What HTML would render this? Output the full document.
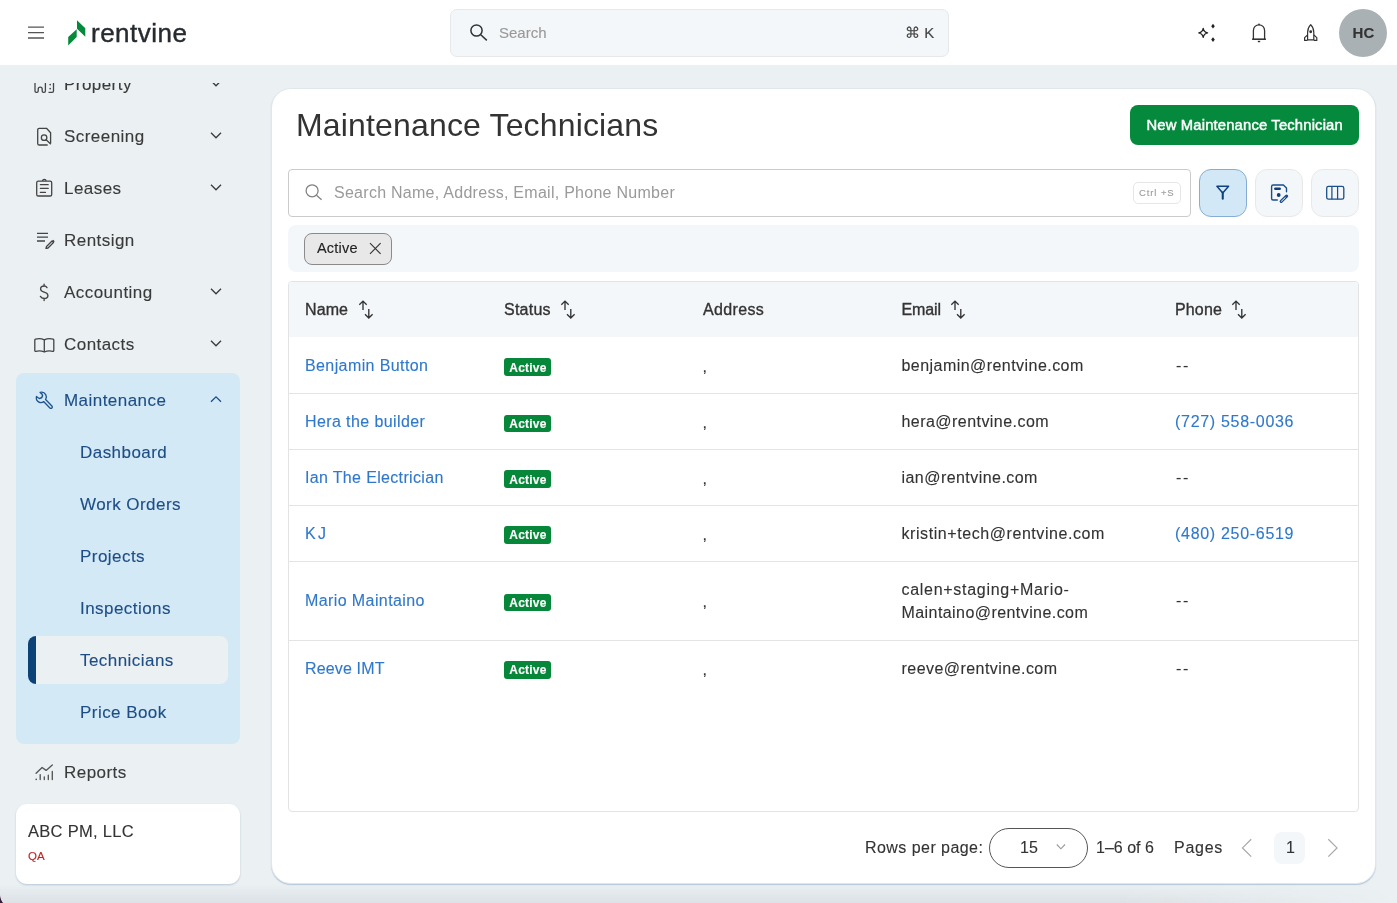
<!DOCTYPE html><html><head><meta charset="utf-8"><style>
*{box-sizing:border-box;margin:0;padding:0}
html,body{width:1397px;height:903px;overflow:hidden}
body{font-family:"Liberation Sans",sans-serif;background:#ebf0f3;position:relative;color:#333}
.a{position:absolute}
.t{position:absolute;white-space:nowrap;-webkit-text-stroke:0.12px currentColor}
</style></head><body><div class="a" style="left:0;top:0;width:1397px;height:903px;will-change:transform">
<div class="a" style="left:0px;top:0px;width:1397px;height:65px;background:#fff"></div>
<svg class="a" style="left:27px;top:26px" width="18" height="14" viewBox="0 0 18 14"><path d="M1 1.2H17M1 6.6H17M1 12H17" stroke="#555" stroke-width="1.3" fill="none"/></svg>
<svg class="a" style="left:66px;top:18px" width="22" height="30" viewBox="66 18 22 30"><path d="M77 20.2L85.3 28.2V36.7L77 28.8Z M76.7 29.2V37.1L68.2 45.5V37.1Z" fill="#058a3c"/></svg>
<div class="t" style="left:91px;top:17px;font-size:26px;line-height:32px;color:#262b2f;font-weight:400;letter-spacing:0.5px;-webkit-text-stroke:0.4px #262b2f">rentvine</div>
<div class="a" style="left:450px;top:9px;width:499px;height:48px;background:#f4f7fa;border:1px solid #e6e8ea;border-radius:7px"></div>
<svg class="a" style="left:464px;top:18px" width="26" height="26" viewBox="0 0 26 26"><circle cx="12.5" cy="12.5" r="5.6" stroke="#333" stroke-width="1.5" fill="none"/><path d="M16.5 16.5L22.8 22.4" stroke="#333" stroke-width="1.5"/></svg>
<div class="t" style="left:499px;top:23px;font-size:15px;line-height:19px;color:#999;font-weight:400;letter-spacing:0px;">Search</div>
<div class="t" style="left:905px;top:23px;font-size:15px;line-height:19px;color:#444;font-weight:400;letter-spacing:0px;">&#8984; K</div>
<svg class="a" style="left:1195px;top:20px" width="24" height="24" viewBox="0 0 24 24"><path d="M8.2 8.3C8.7 11.3 9.6 12.2 12.6 12.8C9.6 13.4 8.7 14.3 8.2 17.3C7.7 14.3 6.8 13.4 3.8 12.8C6.8 12.2 7.7 11.3 8.2 8.3Z" stroke="#222" stroke-width="1.3" fill="none" stroke-linejoin="round"/><path d="M18 3.8L19.8 6.2L18 8.6L16.2 6.2Z M18 17.2L19.8 19.6L18 22L16.2 19.6Z" fill="#222"/></svg>
<svg class="a" style="left:1247px;top:20px" width="24" height="26" viewBox="0 0 24 26"><path d="M6.4 19V10.5C6.4 7.2 8.9 4.8 12 4.8C15.1 4.8 17.6 7.2 17.6 10.5V19" stroke="#333" stroke-width="1.3" fill="none"/><path d="M5.1 19.2H18.9" stroke="#333" stroke-width="1.6"/><circle cx="12" cy="4.3" r="0.9" fill="#333"/><path d="M10.8 21.5H13.2" stroke="#333" stroke-width="1.4"/></svg>
<svg class="a" style="left:1299px;top:20px" width="24" height="24" viewBox="0 0 24 24"><path d="M11.7 4.6C9.6 6.7 8.6 9.6 8.6 12.5V19.8H14.8V12.5C14.8 9.6 13.8 6.7 11.7 4.6Z" stroke="#333" stroke-width="1.2" fill="none" stroke-linejoin="round"/><path d="M8.6 15L5.6 17.6V20.4H8.6 M14.8 15L17.8 17.6V20.4H14.8" stroke="#333" stroke-width="1.2" fill="none" stroke-linejoin="round"/><circle cx="11.7" cy="11.8" r="1.45" fill="#333"/></svg>
<div class="a" style="left:1339px;top:8.7px;width:48px;height:48.0px;background:#aab1b4;border-radius:50%"></div>
<div class="t" style="left:1352.5px;top:23px;font-size:15px;line-height:19px;color:#333;font-weight:700;letter-spacing:0.1px;">HC</div>
<div class="a" style="left:271px;top:88px;width:1105px;height:796px;background:#fff;border-radius:20px;border:1px solid #dfe6ed;box-shadow:0 1px 1px rgba(140,165,195,.55)"></div>
<svg class="a" style="left:30px;top:74px" width="28" height="22" viewBox="0 0 28 22"><path d="M5 5V17C5 17.9 5.5 18.3 6.3 18.3H6.9C7.7 18.3 8.2 17.8 8.2 17V15.2C8.2 14.1 9.1 13.2 10.2 13.2C11.3 13.2 12.2 14.1 12.2 15.2V17C12.2 17.8 12.7 18.3 13.5 18.3H14C14.8 18.3 15.4 17.8 15.4 17V5M23.5 5V17C23.5 17.8 22.9 18.3 22.1 18.3H18.5" stroke="#444" stroke-width="1.3" fill="none" stroke-linejoin="round"/><circle cx="20.2" cy="10.6" r="0.85" fill="#444"/><circle cx="20.2" cy="14.6" r="0.85" fill="#444"/></svg>
<div class="t" style="left:64px;top:74px;font-size:17px;line-height:21px;color:#3a3a3a;font-weight:400;letter-spacing:0.45px;">Property</div>
<svg class="a" style="left:209px;top:78px" width="14" height="12" viewBox="0 0 14 12"><path d="M2 2.8L7 7.8L12 2.8" stroke="#3a3a3a" stroke-width="1.3" fill="none"/></svg>
<div class="a" style="left:0px;top:65px;width:256px;height:18px;background:#ebf0f3"></div>
<svg class="a" style="left:32px;top:124px" width="24" height="24" viewBox="0 0 24 24"><path d="M15.7 21H7.3C6.4 21 5.7 20.3 5.7 19.4V5.9C5.7 5 6.4 4.3 7.3 4.3H14.5L18.6 8.7V19.5" stroke="#444" stroke-width="1.3" fill="none" stroke-linejoin="round"/><circle cx="12.1" cy="13.7" r="2.75" stroke="#444" stroke-width="1.3" fill="none"/><path d="M14.1 15.8L18.4 19.8" stroke="#444" stroke-width="1.3" stroke-linecap="round"/></svg>
<div class="t" style="left:64px;top:126px;font-size:17px;line-height:21px;color:#3a3a3a;font-weight:400;letter-spacing:0.45px;">Screening</div>
<svg class="a" style="left:209px;top:130px" width="14" height="12" viewBox="0 0 14 12"><path d="M2 2.8L7 7.8L12 2.8" stroke="#3a3a3a" stroke-width="1.3" fill="none"/></svg>
<svg class="a" style="left:30px;top:174px" width="28" height="28" viewBox="0 0 28 28"><rect x="6.7" y="7.1" width="15" height="14.9" rx="1.6" stroke="#444" stroke-width="1.3" fill="none"/><path d="M12.6 7.1C12.6 4.9 16 4.9 16 7.1" stroke="#444" stroke-width="1.3" fill="none"/><path d="M10.4 10.7H18.2M10.4 14.4H18.2M10.4 18.4H15.4" stroke="#444" stroke-width="1.3" stroke-linecap="round"/></svg>
<div class="t" style="left:64px;top:178px;font-size:17px;line-height:21px;color:#3a3a3a;font-weight:400;letter-spacing:0.45px;">Leases</div>
<svg class="a" style="left:209px;top:182px" width="14" height="12" viewBox="0 0 14 12"><path d="M2 2.8L7 7.8L12 2.8" stroke="#3a3a3a" stroke-width="1.3" fill="none"/></svg>
<svg class="a" style="left:35px;top:231px" width="22" height="18" viewBox="0 0 22 18"><path d="M2 2.3H13M2 6.2H13M2 10H10" stroke="#444" stroke-width="1.3"/><path d="M11.5 15.5L17 10L18.5 11.5L13 17L11 17.5Z" stroke="#444" stroke-width="1.3" fill="none" stroke-linejoin="round"/><path d="M17 10L18.2 8.8L19.7 10.3L18.5 11.5Z" fill="#444"/></svg>
<div class="t" style="left:64px;top:230px;font-size:17px;line-height:21px;color:#3a3a3a;font-weight:400;letter-spacing:0.45px;">Rentsign</div>
<svg class="a" style="left:30px;top:280px" width="30" height="26" viewBox="0 0 30 26"><path d="M17 7.6C16.4 6.6 15.3 6 14.1 6C12 6 10.6 7.3 10.6 9C10.6 10.8 12 11.5 14.1 12.1C16.3 12.7 17.9 13.5 17.9 15.4C17.9 17.2 16.3 18.5 14.1 18.5C12.5 18.5 11.1 17.7 10.4 16.4M14.1 4.1V6M14.1 18.5V20.6" stroke="#444" stroke-width="1.35" fill="none" stroke-linecap="round"/></svg>
<div class="t" style="left:64px;top:282px;font-size:17px;line-height:21px;color:#3a3a3a;font-weight:400;letter-spacing:0.45px;">Accounting</div>
<svg class="a" style="left:209px;top:286px" width="14" height="12" viewBox="0 0 14 12"><path d="M2 2.8L7 7.8L12 2.8" stroke="#3a3a3a" stroke-width="1.3" fill="none"/></svg>
<svg class="a" style="left:33px;top:336.6px" width="23" height="16" viewBox="0 0 23 16"><path d="M1.8 3C1.8 2.5 2.1 2.2 2.5 2.1C5.2 1.4 8.7 1.5 11.3 2.9C13.9 1.5 17.4 1.4 20.1 2.1C20.5 2.2 20.8 2.5 20.8 3V13.6C20.8 14.1 20.4 14.4 19.9 14.3C17.1 13.6 14 13.7 11.3 15C8.6 13.7 5.5 13.6 2.7 14.3C2.2 14.4 1.8 14.1 1.8 13.6Z M11.3 2.9V15" stroke="#444" stroke-width="1.3" fill="none" stroke-linejoin="round"/></svg>
<div class="t" style="left:64px;top:334px;font-size:17px;line-height:21px;color:#3a3a3a;font-weight:400;letter-spacing:0.45px;">Contacts</div>
<svg class="a" style="left:209px;top:338px" width="14" height="12" viewBox="0 0 14 12"><path d="M2 2.8L7 7.8L12 2.8" stroke="#3a3a3a" stroke-width="1.3" fill="none"/></svg>
<div class="a" style="left:16px;top:372.5px;width:224px;height:371.5px;background:#d3e9f6;border-radius:8px"></div>
<svg class="a" style="left:32px;top:388px" width="24" height="24" viewBox="0 0 24 24"><path d="M8.1 4.4C9.4 5.3 10.5 6.4 10.6 7.6C10.4 9 9 10.3 7.5 10.5C6.3 10.2 5.3 9.3 4.5 8.4C3.9 10.7 4.8 13 6.9 14.1C8.5 14.9 10.3 14.7 11.6 13.6L17.9 19.9C18.5 20.5 19.3 20.5 19.9 19.9C20.5 19.3 20.5 18.5 19.9 17.9L13.6 11.6C14.6 10.1 14.6 8.1 13.7 6.6C12.6 4.7 10.2 3.8 8.1 4.4Z" stroke="#1e5591" stroke-width="1.35" fill="none" stroke-linejoin="round"/></svg>
<div class="t" style="left:64px;top:390px;font-size:17px;line-height:21px;color:#1e4d86;font-weight:400;letter-spacing:0.45px;">Maintenance</div>
<svg class="a" style="left:209px;top:394px" width="14" height="12" viewBox="0 0 14 12"><path d="M2 7.8L7 2.8L12 7.8" stroke="#1e4d86" stroke-width="1.3" fill="none"/></svg>
<div class="a" style="left:28px;top:636px;width:200px;height:48px;background:#ebf0f3;border-radius:8px;overflow:hidden"><div class="a" style="left:0;top:0;width:8px;height:48px;background:#0d4279"></div></div>
<div class="t" style="left:80px;top:442px;font-size:17px;line-height:21px;color:#1e4d86;font-weight:400;letter-spacing:0.45px;">Dashboard</div>
<div class="t" style="left:80px;top:494px;font-size:17px;line-height:21px;color:#1e4d86;font-weight:400;letter-spacing:0.45px;">Work Orders</div>
<div class="t" style="left:80px;top:546px;font-size:17px;line-height:21px;color:#1e4d86;font-weight:400;letter-spacing:0.45px;">Projects</div>
<div class="t" style="left:80px;top:598px;font-size:17px;line-height:21px;color:#1e4d86;font-weight:400;letter-spacing:0.45px;">Inspections</div>
<div class="t" style="left:80px;top:650px;font-size:17px;line-height:21px;color:#1e4d86;font-weight:400;letter-spacing:0.45px;">Technicians</div>
<div class="t" style="left:80px;top:702px;font-size:17px;line-height:21px;color:#1e4d86;font-weight:400;letter-spacing:0.45px;">Price Book</div>
<svg class="a" style="left:30px;top:758px" width="28" height="28" viewBox="0 0 28 28"><path d="M6.1 15.3L12.1 9.5L16.1 12.4L22.3 7" stroke="#555" stroke-width="1.35" fill="none" stroke-linejoin="round" stroke-linecap="round"/><path d="M10.2 16.6V21.6M14.3 18.8V21.6M18.3 17.2V21.6M22.3 13.4V21.6" stroke="#555" stroke-width="1.35" stroke-linecap="round"/><circle cx="6.2" cy="21.4" r="0.8" fill="#555"/></svg>
<div class="t" style="left:64px;top:762px;font-size:17px;line-height:21px;color:#3a3a3a;font-weight:400;letter-spacing:0.45px;">Reports</div>
<div class="a" style="left:16px;top:804px;width:224px;height:80px;background:#fff;border-radius:11px;box-shadow:0 1px 2px rgba(120,150,180,.45)"></div>
<div class="t" style="left:28px;top:821px;font-size:16.5px;line-height:21px;color:#333;font-weight:400;letter-spacing:0.3px;">ABC PM, LLC</div>
<div class="t" style="left:28px;top:849px;font-size:11.5px;line-height:14px;color:#c02626;font-weight:400;letter-spacing:0.1px;">QA</div>
<div class="t" style="left:296px;top:105px;font-size:32px;line-height:40px;color:#333;font-weight:400;letter-spacing:0.16px;-webkit-text-stroke:0">Maintenance Technicians</div>
<div class="a" style="left:1130px;top:105px;width:229px;height:40px;background:#05893c;border-radius:8px"></div>
<div class="t" style="left:1146.5px;top:116px;font-size:14.8px;line-height:18px;color:#fff;font-weight:400;letter-spacing:0.16px;-webkit-text-stroke:0.45px #fff">New Maintenance Technician</div>
<div class="a" style="left:288px;top:169px;width:903px;height:48px;border:1px solid #cbcbcb;border-radius:4px;background:#fff"></div>
<svg class="a" style="left:300px;top:180px" width="28" height="28" viewBox="0 0 28 28"><circle cx="12.1" cy="10.8" r="6" stroke="#808080" stroke-width="1.25" fill="none"/><path d="M16.5 15.2L21.6 19.7" stroke="#808080" stroke-width="1.25"/></svg>
<div class="t" style="left:334px;top:183px;font-size:16px;line-height:20px;color:#9a9a9a;font-weight:400;letter-spacing:0.27px;-webkit-text-stroke:0">Search Name, Address, Email, Phone Number</div>
<div class="a" style="left:1133px;top:182px;width:48px;height:22px;border:1px solid #e6e6e6;border-radius:5px"></div>
<div class="t" style="left:1139px;top:187px;font-size:9.5px;line-height:12px;color:#9c9c9c;font-weight:400;letter-spacing:0.9px;">Ctrl +S</div>
<div class="a" style="left:1199px;top:169px;width:48px;height:48px;background:#d3e8f6;border:1px solid #86aed4;border-radius:12px"></div>
<svg class="a" style="left:1199px;top:169px" width="48" height="48" viewBox="0 0 48 48"><path d="M17.9 17.2H29.6L23.75 23.9Z" stroke="#0f427d" stroke-width="1.5" fill="none" stroke-linejoin="round"/><path d="M23.75 23.5V29.7" stroke="#0f427d" stroke-width="2.1" stroke-linecap="round"/></svg>
<div class="a" style="left:1255px;top:169px;width:48px;height:48px;background:#f4f7fa;border:1px solid #e8e8e8;border-radius:12px"></div>
<svg class="a" style="left:1255px;top:169px" width="48" height="48" viewBox="0 0 48 48"><path d="M22.3 31H18.1C17.2 31 16.6 30.4 16.6 29.5V17.5C16.6 16.6 17.2 16 18.1 16H28.4L31.5 19.1V22.8" stroke="#1a4f8a" stroke-width="1.4" fill="none" stroke-linejoin="round" stroke-linecap="round"/><path d="M20.3 19.8H24.7" stroke="#0e3f78" stroke-width="2.5" stroke-linecap="round"/><circle cx="23.7" cy="26" r="1.9" fill="#0e3f78"/><path d="M26.2 32.4L31.6 27.2" stroke="#1a4f8a" stroke-width="3.2" stroke-linecap="round"/><path d="M26.4 32.2L30.2 28.6" stroke="#f4f7fa" stroke-width="1" stroke-linecap="round"/></svg>
<div class="a" style="left:1311px;top:169px;width:48px;height:48px;background:#f4f7fa;border:1px solid #e8e8e8;border-radius:12px"></div>
<svg class="a" style="left:1311px;top:169px" width="48" height="48" viewBox="0 0 48 48"><rect x="15.7" y="17.4" width="17.1" height="12.8" rx="1.8" stroke="#1a4f8a" stroke-width="1.3" fill="none"/><path d="M20.9 17.4V30.2M26.6 17.4V30.2" stroke="#1a4f8a" stroke-width="1.25"/></svg>
<div class="a" style="left:288px;top:225px;width:1071px;height:47px;background:#f4f7fa;border-radius:8px"></div>
<div class="a" style="left:304px;top:233px;width:88px;height:32px;background:#e8e8e8;border:1.4px solid #8a8a8a;border-radius:8px"></div>
<div class="t" style="left:317px;top:239px;font-size:14.5px;line-height:18px;color:#222;font-weight:400;letter-spacing:0.2px;">Active</div>
<svg class="a" style="left:365px;top:238px" width="20" height="20" viewBox="0 0 20 20"><path d="M5 5.2L15.6 15.8M15.6 5.2L5 15.8" stroke="#333" stroke-width="1.15"/></svg>
<div class="a" style="left:288px;top:281px;width:1071px;height:531px;border:1px solid #e3e3e3;border-radius:4px;background:#fff"></div>
<div class="a" style="left:289px;top:282px;width:1069px;height:55px;background:#f4f7fa;border-radius:3px 3px 0 0"></div>
<div class="t" style="left:305px;top:300px;font-size:16px;line-height:20px;color:#333;font-weight:400;letter-spacing:0.1px;-webkit-text-stroke:0.35px #333">Name</div>
<svg class="a" style="left:357.9px;top:298px" width="20" height="24" viewBox="0 0 20 24"><path d="M5 12V3.5M1.3 6.8L5 3.1L8.7 6.8" stroke="#333" stroke-width="1.35" fill="none"/><path d="M10.8 11V19.8M7 16.3L10.8 20.1L14.6 16.3" stroke="#333" stroke-width="1.35" fill="none"/></svg>
<div class="t" style="left:504px;top:300px;font-size:16px;line-height:20px;color:#333;font-weight:400;letter-spacing:0.25px;-webkit-text-stroke:0.35px #333">Status</div>
<svg class="a" style="left:560.1px;top:298px" width="20" height="24" viewBox="0 0 20 24"><path d="M5 12V3.5M1.3 6.8L5 3.1L8.7 6.8" stroke="#333" stroke-width="1.35" fill="none"/><path d="M10.8 11V19.8M7 16.3L10.8 20.1L14.6 16.3" stroke="#333" stroke-width="1.35" fill="none"/></svg>
<div class="t" style="left:703px;top:300px;font-size:16px;line-height:20px;color:#333;font-weight:400;letter-spacing:0.35px;-webkit-text-stroke:0.35px #333">Address</div>
<div class="t" style="left:901.5px;top:300px;font-size:16px;line-height:20px;color:#333;font-weight:400;letter-spacing:-0.1px;-webkit-text-stroke:0.35px #333">Email</div>
<svg class="a" style="left:949.8px;top:298px" width="20" height="24" viewBox="0 0 20 24"><path d="M5 12V3.5M1.3 6.8L5 3.1L8.7 6.8" stroke="#333" stroke-width="1.35" fill="none"/><path d="M10.8 11V19.8M7 16.3L10.8 20.1L14.6 16.3" stroke="#333" stroke-width="1.35" fill="none"/></svg>
<div class="t" style="left:1175px;top:300px;font-size:16px;line-height:20px;color:#333;font-weight:400;letter-spacing:0.15px;-webkit-text-stroke:0.35px #333">Phone</div>
<svg class="a" style="left:1230.8px;top:298px" width="20" height="24" viewBox="0 0 20 24"><path d="M5 12V3.5M1.3 6.8L5 3.1L8.7 6.8" stroke="#333" stroke-width="1.35" fill="none"/><path d="M10.8 11V19.8M7 16.3L10.8 20.1L14.6 16.3" stroke="#333" stroke-width="1.35" fill="none"/></svg>
<div class="a" style="left:289px;top:393.2px;width:1069px;height:1.0px;background:#e3e3e3"></div>
<div class="t" style="left:305px;top:356px;font-size:16px;line-height:20px;color:#2f78cc;font-weight:400;letter-spacing:0.4px;">Benjamin Button</div>
<div class="a" style="left:504px;top:358.35px;width:46.5px;height:17.5px;background:#07873a;border-radius:3px"></div>
<div class="t" style="left:509.3px;top:361px;font-size:12px;line-height:15px;color:#fff;font-weight:700;letter-spacing:0.2px;">Active</div>
<div class="t" style="left:702.5px;top:357px;font-size:16px;line-height:20px;color:#333;font-weight:400;letter-spacing:0px;">,</div>
<div class="t" style="left:901.5px;top:356px;font-size:16px;line-height:20px;color:#333;font-weight:400;letter-spacing:0.45px;">benjamin@rentvine.com</div>
<div class="t" style="left:1176px;top:356px;font-size:16px;line-height:20px;color:#333;font-weight:400;letter-spacing:1.6px;">--</div>
<div class="a" style="left:289px;top:449.4px;width:1069px;height:1.0px;background:#e3e3e3"></div>
<div class="t" style="left:305px;top:412px;font-size:16px;line-height:20px;color:#2f78cc;font-weight:400;letter-spacing:0.4px;">Hera the builder</div>
<div class="a" style="left:504px;top:414.79999999999995px;width:46.5px;height:17.5px;background:#07873a;border-radius:3px"></div>
<div class="t" style="left:509.3px;top:417px;font-size:12px;line-height:15px;color:#fff;font-weight:700;letter-spacing:0.2px;">Active</div>
<div class="t" style="left:702.5px;top:413px;font-size:16px;line-height:20px;color:#333;font-weight:400;letter-spacing:0px;">,</div>
<div class="t" style="left:901.5px;top:412px;font-size:16px;line-height:20px;color:#333;font-weight:400;letter-spacing:0.45px;">hera@rentvine.com</div>
<div class="t" style="left:1175px;top:412px;font-size:16px;line-height:20px;color:#2f78cc;font-weight:400;letter-spacing:0.7px;">(727) 558-0036</div>
<div class="a" style="left:289px;top:504.5px;width:1069px;height:1.0px;background:#e3e3e3"></div>
<div class="t" style="left:305px;top:468px;font-size:16px;line-height:20px;color:#2f78cc;font-weight:400;letter-spacing:0.34px;">Ian The Electrician</div>
<div class="a" style="left:504px;top:470.45px;width:46.5px;height:17.5px;background:#07873a;border-radius:3px"></div>
<div class="t" style="left:509.3px;top:473px;font-size:12px;line-height:15px;color:#fff;font-weight:700;letter-spacing:0.2px;">Active</div>
<div class="t" style="left:702.5px;top:469px;font-size:16px;line-height:20px;color:#333;font-weight:400;letter-spacing:0px;">,</div>
<div class="t" style="left:901.5px;top:468px;font-size:16px;line-height:20px;color:#333;font-weight:400;letter-spacing:0.45px;">ian@rentvine.com</div>
<div class="t" style="left:1176px;top:468px;font-size:16px;line-height:20px;color:#333;font-weight:400;letter-spacing:1.6px;">--</div>
<div class="a" style="left:289px;top:560.7px;width:1069px;height:1.0px;background:#e3e3e3"></div>
<div class="t" style="left:305px;top:524px;font-size:16px;line-height:20px;color:#2f78cc;font-weight:400;letter-spacing:2.4px;">KJ</div>
<div class="a" style="left:504px;top:526.1px;width:46.5px;height:17.5px;background:#07873a;border-radius:3px"></div>
<div class="t" style="left:509.3px;top:528px;font-size:12px;line-height:15px;color:#fff;font-weight:700;letter-spacing:0.2px;">Active</div>
<div class="t" style="left:702.5px;top:525px;font-size:16px;line-height:20px;color:#333;font-weight:400;letter-spacing:0px;">,</div>
<div class="t" style="left:901.5px;top:524px;font-size:16px;line-height:20px;color:#333;font-weight:400;letter-spacing:0.57px;">kristin+tech@rentvine.com</div>
<div class="t" style="left:1175px;top:524px;font-size:16px;line-height:20px;color:#2f78cc;font-weight:400;letter-spacing:0.7px;">(480) 250-6519</div>
<div class="a" style="left:289px;top:639.5px;width:1069px;height:1.0px;background:#e3e3e3"></div>
<div class="t" style="left:305px;top:591px;font-size:16px;line-height:20px;color:#2f78cc;font-weight:400;letter-spacing:0.4px;">Mario Maintaino</div>
<div class="a" style="left:504px;top:593.6px;width:46.5px;height:17.5px;background:#07873a;border-radius:3px"></div>
<div class="t" style="left:509.3px;top:596px;font-size:12px;line-height:15px;color:#fff;font-weight:700;letter-spacing:0.2px;">Active</div>
<div class="t" style="left:702.5px;top:592px;font-size:16px;line-height:20px;color:#333;font-weight:400;letter-spacing:0px;">,</div>
<div class="t" style="left:901.5px;top:580px;font-size:16px;line-height:20px;color:#333;font-weight:400;letter-spacing:0.71px;">calen+staging+Mario-</div>
<div class="t" style="left:901.5px;top:603px;font-size:16px;line-height:20px;color:#333;font-weight:400;letter-spacing:0.43px;">Maintaino@rentvine.com</div>
<div class="t" style="left:1176px;top:591px;font-size:16px;line-height:20px;color:#333;font-weight:400;letter-spacing:1.6px;">--</div>
<div class="t" style="left:305px;top:659px;font-size:16px;line-height:20px;color:#2f78cc;font-weight:400;letter-spacing:0.15px;">Reeve IMT</div>
<div class="a" style="left:504px;top:661.0px;width:46.5px;height:17.5px;background:#07873a;border-radius:3px"></div>
<div class="t" style="left:509.3px;top:663px;font-size:12px;line-height:15px;color:#fff;font-weight:700;letter-spacing:0.2px;">Active</div>
<div class="t" style="left:702.5px;top:660px;font-size:16px;line-height:20px;color:#333;font-weight:400;letter-spacing:0px;">,</div>
<div class="t" style="left:901.5px;top:659px;font-size:16px;line-height:20px;color:#333;font-weight:400;letter-spacing:0.45px;">reeve@rentvine.com</div>
<div class="t" style="left:1176px;top:659px;font-size:16px;line-height:20px;color:#333;font-weight:400;letter-spacing:1.6px;">--</div>
<div class="t" style="left:865px;top:838px;font-size:16px;line-height:20px;color:#333;font-weight:400;letter-spacing:0.45px;">Rows per page:</div>
<div class="a" style="left:989px;top:828px;width:99px;height:40px;border:1px solid #555;border-radius:20px"></div>
<div class="t" style="left:1020px;top:838px;font-size:16px;line-height:20px;color:#333;font-weight:400;letter-spacing:0px;">15</div>
<svg class="a" style="left:1053px;top:840px" width="16" height="14" viewBox="0 0 16 14"><path d="M3.8 4.5L7.9 8.8L12 4.5" stroke="#999" stroke-width="1.1" fill="none"/></svg>
<div class="t" style="left:1096px;top:838px;font-size:16px;line-height:20px;color:#333;font-weight:400;letter-spacing:0px;">1&ndash;6 of 6</div>
<div class="t" style="left:1174px;top:838px;font-size:16px;line-height:20px;color:#333;font-weight:400;letter-spacing:0.75px;">Pages</div>
<svg class="a" style="left:1238px;top:836px" width="18" height="24" viewBox="0 0 18 24"><path d="M13.2 3.3L4.5 11.9L13.2 20.6" stroke="#aaa" stroke-width="1.3" fill="none"/></svg>
<div class="a" style="left:1274px;top:832px;width:31px;height:32px;background:#f4f7fa;border-radius:8px"></div>
<div class="t" style="left:1286px;top:838px;font-size:16px;line-height:20px;color:#333;font-weight:400;letter-spacing:0px;">1</div>
<svg class="a" style="left:1324px;top:836px" width="18" height="24" viewBox="0 0 18 24"><path d="M4.3 3.3L13 11.9L4.3 20.6" stroke="#aaa" stroke-width="1.3" fill="none"/></svg>
<div class="a" style="left:0px;top:884px;width:1397px;height:19px;background:linear-gradient(to bottom, rgba(40,50,60,0) 0%, rgba(40,50,60,0.075) 100%);-webkit-mask-image:linear-gradient(to right, #000 0%, #000 80%, transparent 100%)"></div>
<div class="a" style="left:0;top:894px;width:14px;height:9px;background:radial-gradient(circle 13.3px at 13.3px 0.6px, rgba(0,0,0,0) 12.8px, #3b1d3b 13.6px)"></div>
</div></body></html>
